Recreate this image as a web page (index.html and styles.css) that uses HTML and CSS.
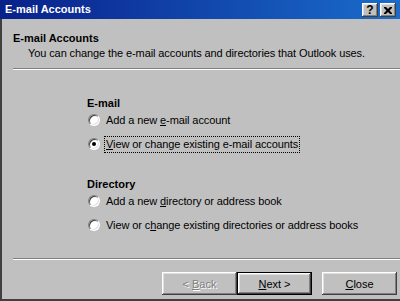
FILE: index.html
```html
<!DOCTYPE html>
<html>
  <head>
    <title>E-mail Accounts</title>
    <link rel="stylesheet" href="styles.css">
  </head>
  <body>
    <div class="window">
      <div class="titlebar">
        <span class="title">E-mail Accounts</span>
        <div class="caption-buttons">
          <span class="cap-btn help">?</span>
          <span class="cap-btn close">
            <svg width="8" height="7" viewBox="0 0 8 7">
              <path d="M0 0h2l2 2 2-2h2v1l-2.5 2.5L8 6v1H6L4 5 2 7H0V6l2.5-2.5L0 1z" fill="#000"/>
            </svg>
          </span>
        </div>
      </div>

      <div class="client">
        <div class="header">
          <h1>E-mail Accounts</h1>
          <p>You can change the e-mail accounts and directories that Outlook uses.</p>
        </div>
        <div class="rule"></div>

        <div class="main">
          <div class="group">
            <div class="group-label">E-mail</div>
            <div class="radio-row">
              <span class="radio"></span>
              <span class="label">Add a new <u>e</u>-mail account</span>
            </div>
            <div class="radio-row">
              <span class="radio checked"></span>
              <span class="label focused"><u>V</u>iew or change existing e-mail accounts</span>
            </div>
          </div>

          <div class="group second">
            <div class="group-label">Directory</div>
            <div class="radio-row">
              <span class="radio"></span>
              <span class="label">Add a new <u>d</u>irectory or address book</span>
            </div>
            <div class="radio-row">
              <span class="radio"></span>
              <span class="label">View or c<u>h</u>ange existing directories or address books</span>
            </div>
          </div>
        </div>

        <div class="rule"></div>
        <div class="footer">
          <button class="btn disabled">&lt; <u>B</u>ack</button>
          <button class="btn default"><u>N</u>ext &gt;</button>
          <button class="btn close-btn"><u>C</u>lose</button>
        </div>
      </div>
    </div>
  </body>
</html>
```

FILE: styles.css
```css
body { margin: 0; font-family: "Liberation Sans", Arial, sans-serif; font-size: 11px; color: #000; }

.window {
    width: 400px;
    height: 301px;
    display: flex;
    flex-direction: column;
    background: #c0c0c0;
    overflow: hidden;
}

.titlebar {
    height: 19px;
    flex: none;
    display: flex;
    align-items: center;
    justify-content: space-between;
    padding-left: 5px;
    padding-right: 4px;
    background: linear-gradient(to right, #08208a, #1a6ccc);
}
.title { color: #fff; font-weight: bold; font-size: 11px; line-height: 13px; }

.caption-buttons { display: flex; gap: 2px; padding-top: 1px; }
.cap-btn {
    width: 16px;
    height: 14px;
    box-sizing: border-box;
    display: flex;
    align-items: center;
    justify-content: center;
    background: #c0c0c0;
    font-weight: bold;
    font-size: 12px;
    box-shadow: inset -1px -1px #404040, inset 1px 1px #fff, inset -2px -2px #808080, inset 2px 2px #dfdfdf;
}

.client {
    flex: 1;
    display: flex;
    flex-direction: column;
    border-left: 2px solid #404040;
    border-bottom: 2px solid #404040;
}

.header { padding: 13px 0 8px 11px; }
.header h1 { margin: 0; font-size: 11px; line-height: 13px; font-weight: bold; }
.header p { margin: 2px 0 0; padding-left: 15px; line-height: 13px; letter-spacing: -0.1px; }

.rule { margin-left: 11px; border-top: 1px solid #808080; border-bottom: 1px solid #fff; }

.main { flex: 1; padding: 27px 0 0 85px; }
.group-label { font-weight: bold; line-height: 13px; }
.group.second { margin-top: 24px; }

.radio-row { display: flex; align-items: center; height: 20px; margin-left: 1px; }
.radio-row + .radio-row { margin-top: 4px; }

.radio {
    position: relative;
    width: 12px;
    height: 12px;
    box-sizing: border-box;
    border-radius: 50%;
    background: #fff;
    border: 1px solid;
    border-color: #808080 #fff #fff #808080;
    box-shadow: inset 1px 1px 0 #404040, inset -1px -1px 0 #dfdfdf;
    margin-right: 4px;
}
.radio.checked::after {
    content: "";
    position: absolute;
    left: 3px;
    top: 3px;
    width: 4px;
    height: 4px;
    border-radius: 50%;
    background: #000;
}

.label { line-height: 13px; padding: 1px 1px; border: 1px dotted transparent; letter-spacing: -0.1px; }
.label.focused { border-color: #000; }

.footer { display: flex; justify-content: flex-end; padding: 12px 3px 4px 0; }
.btn {
    width: 75px;
    height: 23px;
    box-sizing: border-box;
    background: #c0c0c0;
    border: none;
    padding: 0;
    font-family: inherit;
    font-size: 11px;
    color: #000;
    box-shadow: inset -1px -1px #404040, inset 1px 1px #fff, inset -2px -2px #808080, inset 2px 2px #dfdfdf;
}
.btn.disabled { color: #808080; text-shadow: 1px 1px #fff; }
.btn.default {
    border: 1px solid #000;
    box-shadow: inset -1px -1px #404040, inset 1px 1px #fff, inset -2px -2px #808080, inset 2px 2px #dfdfdf;
}
.btn.close-btn { margin-left: 10px; }
```
